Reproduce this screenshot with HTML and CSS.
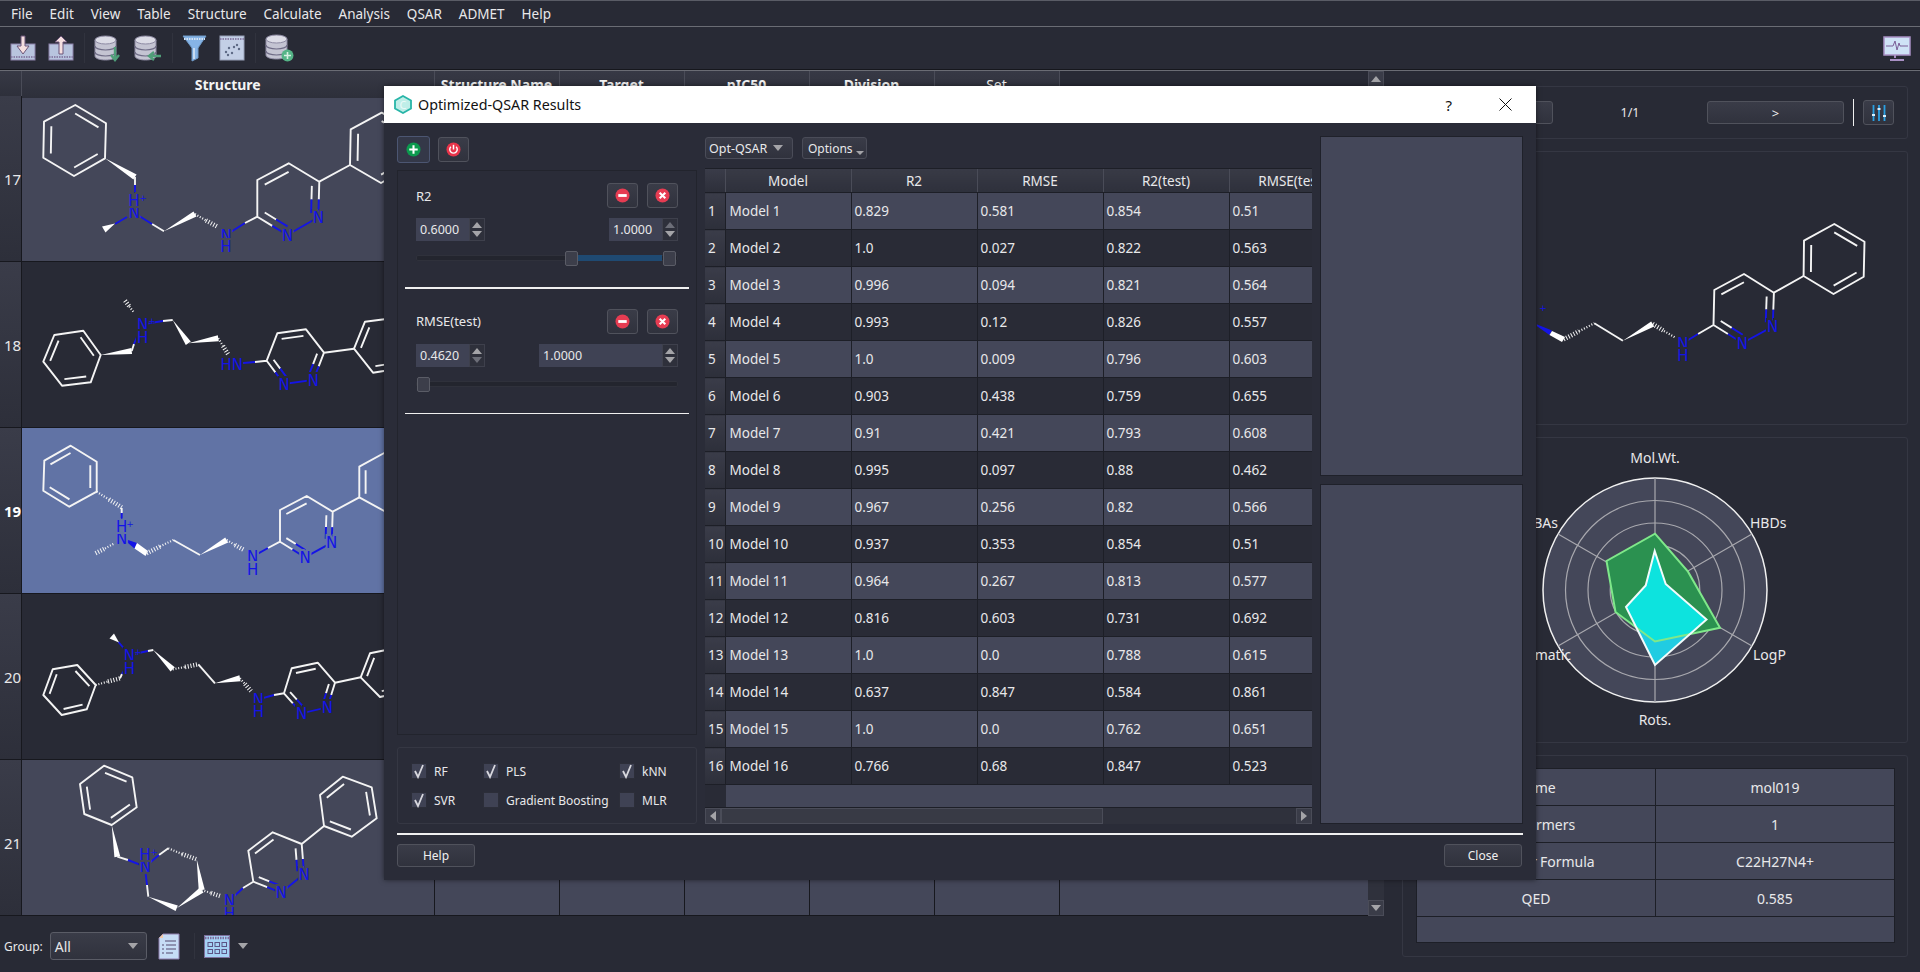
FILE: index.html
```html
<!DOCTYPE html>
<html lang="en">
<head>
    <meta charset="UTF-8">
    <title>Optimized-QSAR Results</title>
    <link rel="stylesheet" href="styles.css">
</head>
<body>
<svg class="icon-defs" width="0" height="0">
    <defs>
        <symbol id="ic-db" viewBox="0 0 24 26">
            <path d="M1 5v16c0 2.5 5 4 10.5 4S22 23.500 22 21V5z" fill="#c4c4d2" stroke="#8d8aa2"/>
            <ellipse cx="11.500" cy="5" rx="10.500" ry="4" fill="#dcdce6" stroke="#8d8aa2"/>
            <path d="M1 11c0 2.500 5 4 10.500 4S22 13.500 22 11M1 17c0 2.500 5 4 10.500 4S22 19.500 22 17" fill="none" stroke="#6f6c86" stroke-width="1.200"/>
        </symbol>
        <symbol id="ic-minus" viewBox="0 0 16 16">
            <circle cx="8" cy="8" r="7.500" fill="#e63c52"/>
            <rect x="3.500" y="6.500" width="9" height="3" fill="#fff"/>
        </symbol>
        <symbol id="ic-cross" viewBox="0 0 16 16">
            <circle cx="8" cy="8" r="7.500" fill="#e63c52"/>
            <path d="M5 5l6 6M11 5l-6 6" stroke="#fff" stroke-width="2.200"/>
        </symbol>
        <symbol id="ic-check" viewBox="0 0 16 16">
            <path d="M4 8l3 6 5-12" fill="none" stroke="#d8d8de" stroke-width="1.800"/>
        </symbol>
        <clipPath id="green-area">
            <polygon points="1655,533.700 1688,571.700 1720,627.700 1655,641.500 1615.500,612 1606.500,561"/>
        </clipPath>
    </defs>
</svg>

<div class="menu-bar">
    <span>File</span><span>Edit</span><span>View</span><span>Table</span><span>Structure</span><span>Calculate</span><span>Analysis</span><span>QSAR</span><span>ADMET</span><span>Help</span>
</div>

<div class="tool-bar">
    <svg class="tool" width="26" height="26" viewBox="0 0 26 26">
        <rect x="1" y="9" width="24" height="16" fill="#b8c4de" stroke="#8a80a8"/>
        <path d="M1 22h24" stroke="#8a80a8" stroke-width="2" stroke-dasharray="1.500 1"/>
        <path d="M11 1h4v10h4l-6 8-6-8h4z" fill="#f5dfe0" stroke="#6b5578"/>
    </svg>
    <svg class="tool" width="26" height="26" viewBox="0 0 26 26">
        <rect x="1" y="9" width="24" height="16" fill="#b8c4de" stroke="#8a80a8"/>
        <path d="M1 22h24" stroke="#8a80a8" stroke-width="2" stroke-dasharray="1.500 1"/>
        <path d="M11 19V7H7l6-6 6 6h-4v12z" fill="#f5dfe0" stroke="#6b5578"/>
    </svg>
    <span class="tool-sep"></span>
    <svg class="tool" width="28" height="27" viewBox="0 0 28 27">
        <use href="#ic-db" width="24" height="26"/>
        <path d="M21 12v11M17 20l4 5 4-5" fill="none" stroke="#4f9e78" stroke-width="2.400"/>
    </svg>
    <svg class="tool" width="28" height="27" viewBox="0 0 28 27">
        <use href="#ic-db" width="24" height="26"/>
        <path d="M27 21H16M20 17l-5 4 5 4" fill="none" stroke="#4f9e78" stroke-width="2.400"/>
    </svg>
    <span class="tool-sep"></span>
    <svg class="tool" width="25" height="27" viewBox="0 0 25 27">
        <path d="M1 1h23l-8 12v10l-6 3V13z" fill="#86b4e6" stroke="#6f9ac8"/>
        <path d="M2 4h21" stroke="#d4e4f6" stroke-width="2" stroke-dasharray="1.500 1"/>
        <path d="M12 13v11" stroke="#c8dcf2" stroke-width="2"/>
    </svg>
    <svg class="tool" width="26" height="26" viewBox="0 0 26 26">
        <rect x="1" y="1" width="24" height="24" fill="#c3cfe6" stroke="#97a0b8"/>
        <path d="M1 4h24" stroke="#8a80a8" stroke-width="2" stroke-dasharray="1.500 1"/>
        <g fill="#5e6a86"><circle cx="7" cy="17" r="1.200"/><circle cx="10" cy="13" r="1.200"/><circle cx="13" cy="18" r="1.200"/><circle cx="15" cy="12" r="1.200"/><circle cx="18" cy="10" r="1.200"/><circle cx="20" cy="14" r="1.200"/><circle cx="9" cy="20" r="1.200"/></g>
    </svg>
    <span class="tool-sep"></span>
    <svg class="tool" width="29" height="28" viewBox="0 0 29 28">
        <use href="#ic-db" width="24" height="26"/>
        <circle cx="22.500" cy="21.500" r="6" fill="#55b487"/>
        <path d="M22.500 18v7M19 21.500h7" stroke="#d6f0e2" stroke-width="1.600"/>
    </svg>
    <svg class="tool tool-end" width="28" height="25" viewBox="0 0 28 25">
        <rect x="1" y="1" width="26" height="18" fill="#cfe2f6" stroke="#a890c4" stroke-width="1.500"/>
        <path d="M3 10h7l2-5 2 9 2-7 1 3h8" fill="none" stroke="#7a5c96"/>
        <path d="M12 19v3M7 24h14" stroke="#a890c4" stroke-width="2"/>
    </svg>
</div>

<div class="content">
    <div class="left-column">
        <div class="table-area">
            <div class="mol-table">
                <div class="mol-head">
                    <div class="head-cell corner"></div>
                    <div class="head-cell head-main">Structure</div>
                    <div class="head-cell head-main">Structure Name</div>
                    <div class="head-cell head-main">Target</div>
                    <div class="head-cell head-main">pIC50</div>
                    <div class="head-cell head-main">Division</div>
                    <div class="head-cell head-plain">Set</div>
                </div>

                <div class="mol-row light">
                    <div class="row-num">17</div>
                    <div class="mol-cell">
                        <svg class="mol" width="412" height="165" viewBox="22 96 412 165">
                            <polygon class="b" points="75.300,105 106,123.300 105,158.300 74,176 43.300,157.700 44,121.700"/>
                            <path class="b in" d="M75.300 105L106 123.300M105 158.300L74 176M43.300 157.700L44 121.700"/>
                            <polygon class="w" points="105,158.300 133.400,179.500 136.600,174.500"/>
                            <path class="b" d="M135 177V185M152 224L164 231.300"/>
                            <path class="n" d="M135 185V193M134 212.700L152 224M127 217L115 224M226 235L245 223"/>
                            <polygon class="w" points="115,223.500 102,226.500 105.500,232.500"/>
                            <polygon class="w" points="164,231.300 193.500,211.400 196.500,216.600"/>
                            <path class="h1" d="M195 214L206 220.500"/><path class="h2" d="M206 220.500L218 227"/>
                            <path class="b" d="M245 223L257.300 216.700M318.800 199.500L319.300 181.700 288.700 163.300 257.300 180V216.700L272.300 225.900M319.300 181.700L350 165"/>
                            <path class="n" d="M318.800 199.500L318.300 217.300 287.300 235 272.300 225.900"/>
                            <g class="in">
                                <path class="b" d="M257.300 180L288.700 163.300M319.300 181.700L318.800 199.500M272.300 225.900L257.300 216.700"/>
                                <path class="n" d="M318.800 199.500L318.300 217.300M287.300 235L272.300 225.900"/>
                            </g>
                            <polygon class="b" points="350,165 350.700,129.300 381.700,112.700 413,130 412,165 381,183"/>
                            <path class="b in" d="M350 165L350.700 129.300M381.700 112.700L413 130M412 165L381 183"/>
                            <text class="t" x="134" y="218">N</text><text class="t" x="134" y="205.500">H</text><text class="p" x="143" y="201">+</text>
                            <text class="t" x="226" y="240.500">N</text><text class="t" x="226" y="252">H</text>
                            <text class="t" x="318.300" y="222.500">N</text><text class="t" x="287.300" y="240.500">N</text>
                        </svg>
                    </div>
                    <div class="cell"></div><div class="cell"></div><div class="cell"></div><div class="cell"></div><div class="cell"></div><div class="cell"></div>
                </div>

                <div class="mol-row dark">
                    <div class="row-num">18</div>
                    <div class="mol-cell">
                        <svg class="mol" width="412" height="165" viewBox="22 262 412 165">
                            <polygon class="b" points="83.300,330.700 100.700,355 90.700,382.300 62,385.700 43.300,361.700 54.300,335"/>
                            <path class="b in" d="M83.300 330.700L100.700 355M90.700 382.300L62 385.700M43.300 361.700L54.300 335"/>
                            <polygon class="w" points="100.700,355 131.300,348 132.100,354"/>
                            <path class="b" d="M131.700 351L134 344M163 321L172.700 320"/>
                            <path class="n" d="M134 344L137 337M142.700 324.300L163 321M232 364L255 362"/>
                            <path class="h1" d="M133.300 311.700L129 306"/><path class="h2" d="M129 306L124 299.300"/>
                            <polygon class="w" points="172.700,320 190.800,341.600 185.800,345"/>
                            <polygon class="w" points="188.300,343.300 217.800,335.300 218.800,341.300"/>
                            <path class="h1" d="M218.300 338.300L223 346"/><path class="h2" d="M223 346L228 354"/>
                            <path class="b" d="M255 362L266.700 360.700M318.700 366.400L324 352.700 306 329.300 277.300 333.300 266.700 360.700 275.400 372.400M324 352.700L354 348.700"/>
                            <path class="n" d="M318.700 366.400L313.300 380 284 384 275.400 372.400"/>
                            <g class="in">
                                <path class="b" d="M277.300 333.300L306 329.300M324 352.700L318.700 366.400M275.400 372.400L266.700 360.700"/>
                                <path class="n" d="M318.700 366.400L313.300 380M284 384L275.400 372.400"/>
                            </g>
                            <polygon class="b" points="354,348.700 365,321.700 394,318 412,341 402,368 373,372.700"/>
                            <path class="b in" d="M354 348.700L365 321.700M394 318L412 341M402 368L373 372.700"/>
                            <text class="t" x="142.700" y="329.800">N</text><text class="t" x="142.700" y="342.500">H</text><text class="p" x="152" y="324">+</text>
                            <text class="t" x="231.700" y="369.500">HN</text>
                            <text class="t" x="313.300" y="385.500">N</text><text class="t" x="284" y="389.500">N</text>
                        </svg>
                    </div>
                    <div class="cell"></div><div class="cell"></div><div class="cell"></div><div class="cell"></div><div class="cell"></div><div class="cell"></div>
                </div>

                <div class="mol-row selected">
                    <div class="row-num row-num-on">19</div>
                    <div class="mol-cell">
                        <svg class="mol" width="412" height="165" viewBox="22 428 412 165">
                            <polygon class="b" points="70.700,445.700 96.700,461.700 96.700,491.700 69.300,506.700 43.300,490.700 44.300,460.700"/>
                            <path class="b in" d="M44.300 460.700L70.700 445.700M96.700 461.700V491.700M69.300 506.700L43.300 490.700"/>
                            <path class="h1" d="M96.700 491.700L109 499.500"/><path class="h2" d="M109 499.500L121.700 507.300"/>
                            <path class="b" d="M121.700 508V513"/>
                            <path class="n" d="M121.700 513V519"/>
                            <path class="h1" d="M113.300 544L104 549"/><path class="h2" d="M104 549L94 554"/>
                            <polygon class="nf" points="122,538 137,543 134.500,548.500"/>
                            <polygon class="w" points="137,543 148,551 145.500,556 134.500,548.500"/>
                            <path class="h2" d="M146.700 553.300L160 546.500"/><path class="h1" d="M160 546.500L173.300 540"/>
                            <path class="b" d="M173.300 540L200 555"/>
                            <polygon class="w" points="200,555 225.200,537.400 228.200,542.600"/>
                            <path class="h1" d="M226.700 540L235 545"/><path class="h2" d="M235 545L244 550"/>
                            <path class="n" d="M252.700 556.700L268 548"/>
                            <path class="b" d="M268 548L280 541.700M332.200 527.200L332.700 511.700 306.700 496 280 510V541.700L292.500 549.500M332.700 511.700L359.300 497.300"/>
                            <path class="n" d="M332.200 527.200L331.700 542.700 305 557.300 292.500 549.500"/>
                            <g class="in">
                                <path class="b" d="M280 510L306.700 496M332.700 511.700L332.200 527.200M292.500 549.500L280 541.700"/>
                                <path class="n" d="M332.200 527.200L331.700 542.700M305 557.300L292.500 549.500"/>
                            </g>
                            <polygon class="b" points="359.300,497.300 359.300,466.700 386,452 412,467 412,498 386,512"/>
                            <path class="b in" d="M359.300 497.300V466.700M386 452L412 467M412 498L386 512"/>
                            <text class="t" x="121.700" y="543.800">N</text><text class="t" x="121.700" y="531.500">H</text><text class="p" x="130" y="526.500">+</text>
                            <text class="t" x="252.700" y="562.200">N</text><text class="t" x="252.700" y="574.800">H</text>
                            <text class="t" x="331.700" y="548.200">N</text><text class="t" x="305" y="562.800">N</text>
                        </svg>
                    </div>
                    <div class="cell"></div><div class="cell"></div><div class="cell"></div><div class="cell"></div><div class="cell"></div><div class="cell"></div>
                </div>

                <div class="mol-row dark">
                    <div class="row-num">20</div>
                    <div class="mol-cell">
                        <svg class="mol" width="412" height="165" viewBox="22 594 412 165">
                            <polygon class="b" points="77.300,665 95.700,685 86.700,709.300 61.700,715 43.300,695 52.700,669.300"/>
                            <path class="b in" d="M77.300 665L95.700 685M86.700 709.300L61.700 715M43.300 695L52.700 669.300"/>
                            <path class="h1" d="M95.700 685L108 681.500"/><path class="h2" d="M108 681.500L120 678.300"/>
                            <path class="b" d="M120 678.300L122 674"/>
                            <path class="n" d="M122 674L125 669M118.500 642L129.300 655M129.300 655L148 651"/>
                            <polygon class="w" points="119,642.500 109.500,638.500 114,633.500"/>
                            <path class="b" d="M148 651L153.300 650"/>
                            <polygon class="w" points="153.300,650 174.800,667.200 170.600,671.400"/>
                            <path class="h1" d="M172.700 669.300L185 667"/><path class="h2" d="M185 667L198.300 664.300"/>
                            <path class="b" d="M198.300 664.300L215 683.300"/>
                            <polygon class="w" points="215,683.300 239.400,675.300 240.600,681.300"/>
                            <path class="h1" d="M240 678.300L245 684"/><path class="h2" d="M245 684L251 691"/>
                            <path class="n" d="M258.300 699.300L274 695"/>
                            <path class="b" d="M274 695L284 693.300M331.200 695L335 682.700 317.700 662.700 291.700 668.300 284 693.300 292.900 703.300M335 682.700L360.700 677.300"/>
                            <path class="n" d="M331.200 695L327.300 707.300 301.700 713.300 292.900 703.300"/>
                            <g class="in">
                                <path class="b" d="M291.700 668.300L317.700 662.700M335 682.700L331.200 695M292.900 703.300L284 693.300"/>
                                <path class="n" d="M331.200 695L327.300 707.300M301.700 713.300L292.900 703.300"/>
                            </g>
                            <polygon class="b" points="360.700,677.300 370,653.300 396,648 414,667 406,691 380,697"/>
                            <path class="b in" d="M360.700 677.300L370 653.300M396 648L414 667M406 691L380 697"/>
                            <text class="t" x="129.300" y="660.500">N</text><text class="t" x="129.300" y="673.800">H</text><text class="p" x="138" y="655">+</text>
                            <text class="t" x="258.300" y="704.800">N</text><text class="t" x="258.300" y="717.200">H</text>
                            <text class="t" x="327.300" y="712.800">N</text><text class="t" x="301.700" y="718.800">N</text>
                        </svg>
                    </div>
                    <div class="cell"></div><div class="cell"></div><div class="cell"></div><div class="cell"></div><div class="cell"></div><div class="cell"></div>
                </div>

                <div class="mol-row light mol-row-last">
                    <div class="row-num">21</div>
                    <div class="mol-cell">
                        <svg class="mol" width="412" height="155" viewBox="22 760 412 155">
                            <polygon class="b" points="104,765.700 132.300,777.300 136.700,807.300 111.700,825 84.300,814 80,784"/>
                            <path class="b in" d="M104 765.700L132.300 777.300M136.700 807.300L111.700 825M84.300 814L80 784"/>
                            <polygon class="w" points="111.700,825 120.200,856.200 114.400,857.200"/>
                            <path class="b" d="M117.300 856.700L128 860M159 855L168.300 848.300M148.300 896.700L147 885"/>
                            <path class="n" d="M128 860L145 866.700M145 866.700L159 855M145.700 874L147 885M229.300 900.700L243 888"/>
                            <path class="h1" d="M168.300 848.300L182 854"/><path class="h2" d="M182 854L196.700 859.300"/>
                            <polygon class="w" points="196.700,859.300 204.700,889.500 198.700,890.500"/>
                            <polygon class="w" points="176.700,908.300 199.900,887.600 203.500,892.400"/>
                            <polygon class="w" points="148.300,896.700 175.600,911 177.800,905.600"/>
                            <path class="h1" d="M201.700 890L211 893"/><path class="h2" d="M211 893L220 896"/>
                            <path class="b" d="M243 888L253.300 881.700M302.900 859L301.700 844 272.700 832.300 248.300 850.700 253.300 881.700 267.200 887.200M301.700 844L324 826"/>
                            <path class="n" d="M302.900 859L304 874 281 892.700 267.200 887.200"/>
                            <g class="in">
                                <path class="b" d="M248.300 850.700L272.700 832.300M301.700 844L302.900 859M267.200 887.200L253.300 881.700"/>
                                <path class="n" d="M302.900 859L304 874M281 892.700L267.200 887.200"/>
                            </g>
                            <polygon class="b" points="324,826 320,795 342.700,776.700 371.700,787.300 376.700,818.300 351.700,836.700"/>
                            <path class="b in" d="M320 795L342.700 776.700M371.700 787.300L376.700 818.300M351.700 836.700L324 826"/>
                            <text class="t" x="145" y="872.200">N</text><text class="t" x="145" y="859.500">H</text><text class="p" x="154" y="855">+</text>
                            <text class="t" x="229.300" y="906.200">N</text><text class="t" x="229.300" y="918.500">H</text>
                            <text class="t" x="304" y="879.500">N</text><text class="t" x="281" y="898.200">N</text>
                        </svg>
                    </div>
                    <div class="cell"></div><div class="cell"></div><div class="cell"></div><div class="cell"></div><div class="cell"></div><div class="cell"></div>
                </div>
            </div>
            <div class="v-scroll">
                <div class="scroll-btn"><span class="tri tri-up"></span></div>
                <div class="v-track"></div>
                <div class="scroll-btn"><span class="tri tri-down"></span></div>
            </div>
        </div>
        <div class="group-bar">
            <span class="group-label">Group:</span>
            <div class="group-combo"><span>All</span><span class="tri tri-down"></span></div>
            <svg class="bar-icon" width="22" height="27" viewBox="0 0 22 27">
                <path d="M5 1h16v25H1V5z" fill="#c6dcf5" stroke="#8f7fae"/>
                <path d="M1 5h4V1z" fill="#f2c9a6"/>
                <path d="M7 8h11M4 12h2M8 12h10M4 16h2M8 16h10M4 20h2M8 20h7" stroke="#54486e" stroke-width="1.200"/>
            </svg>
            <span class="bar-sep"></span>
            <svg class="bar-icon-grid" width="26" height="23" viewBox="0 0 26 23">
                <rect x=".5" y=".5" width="25" height="22" fill="#a5d2f5" stroke="#7d6f9c"/>
                <path d="M1 3h24" stroke="#7d6f9c" stroke-width="2.500" stroke-dasharray="1.500 1"/>
                <g fill="none" stroke="#5c5486"><rect x="4" y="7.500" width="4.500" height="4"/><rect x="11" y="7.500" width="4.500" height="4"/><rect x="18" y="7.500" width="4.500" height="4"/><rect x="4" y="14.500" width="4.500" height="4"/><rect x="11" y="14.500" width="4.500" height="4"/><rect x="18" y="14.500" width="4.500" height="4"/></g>
            </svg>
            <span class="tri tri-down grid-arrow"></span>
        </div>
    </div>

    <div class="side">
        <div class="box nav-box">
            <button class="btn nav-btn"></button>
            <span class="page-count">1/1</span>
            <button class="btn nav-btn">&gt;</button>
            <span class="nav-sep"></span>
            <button class="btn icon-btn">
                <svg width="16" height="18" viewBox="0 0 16 18">
                    <path d="M2.500 1v16M8 1v16M13.500 1v16" stroke="#2a9fe0" stroke-width="1.800"/>
                    <path d="M1 11h3M6.500 5h3M12 12h3" stroke="#d8eefc" stroke-width="1.800"/>
                </svg>
            </button>
        </div>
        <div class="box mol-box">
            <svg class="mol" width="504" height="272" viewBox="1403 152 504 272">
                <polygon class="b" points="1834.300,224 1864.500,241.700 1863.700,276.700 1833.500,294 1803.600,276 1804,240.700"/>
                <path class="b in" d="M1834.300 224L1864.500 241.700M1863.700 276.700L1833.500 294M1803.600 276L1804 240.700"/>
                <path class="b" d="M1803.600 276L1773.900 292.700M1773.300 309.700L1773.900 292.700 1744 274 1714.300 290 1713.500 325 1728 334M1713.500 325L1698 334"/>
                <path class="n" d="M1773.300 309.700L1772.700 326.700 1742.400 343 1728 334M1682.900 343.300L1698 334"/>
                <g class="in">
                    <path class="b" d="M1714.300 290L1744 274M1773.900 292.700L1773.300 309.700M1728 334L1713.500 325"/>
                    <path class="n" d="M1773.300 309.700L1772.700 326.700M1742.400 343L1728 334"/>
                </g>
                <path class="h2" d="M1652.700 324L1664 331"/><path class="h1" d="M1664 331L1676 338"/>
                <polygon class="w" points="1622.900,340.700 1651.200,321.400 1654.200,326.600"/>
                <path class="b" d="M1594.300 323.300L1622.900 340.700"/>
                <path class="h2" d="M1563.700 339.300L1579 331.300"/><path class="h1" d="M1579 331.300L1594.300 323.300"/>
                <polygon class="nf" points="1531,322 1552,330.500 1549.500,335"/>
                <polygon class="w" points="1552,331 1565,337 1562,342 1549.500,335"/>
                <text class="t" x="1531" y="327.500">N</text><text class="t" x="1531" y="316">H</text><text class="p" x="1543" y="311">+</text>
                <text class="t" x="1682.900" y="348.800">N</text><text class="t" x="1682.900" y="360.500">H</text>
                <text class="t" x="1772.700" y="332.200">N</text><text class="t" x="1742.400" y="348.500">N</text>
            </svg>
        </div>
        <div class="box radar-box">
            <svg class="radar" width="504" height="304" viewBox="1403 438 504 304">
                <circle cx="1655" cy="590" r="112" fill="#444759" stroke="#f0f0f0" stroke-width="1.500"/>
                <g fill="none" stroke="#a8a8ae" stroke-width="1.200">
                    <circle cx="1655" cy="590" r="89.500"/><circle cx="1655" cy="590" r="67"/><circle cx="1655" cy="590" r="44.800"/><circle cx="1655" cy="590" r="22.400"/>
                    <path d="M1655 478V702M1558 534L1752 646M1752 534L1558 646"/>
                </g>
                <polygon points="1655,533.700 1688,571.700 1720,627.700 1655,641.500 1615.500,612 1606.500,561" fill="#2b9150"/>
                <polygon points="1654.700,551 1665.700,584 1706.500,619.400 1655,665 1626,607 1645.700,585.500" fill="#20cce2"/>
                <polygon points="1654.700,551 1665.700,584 1706.500,619.400 1655,665 1626,607 1645.700,585.500" fill="#0de3de" clip-path="url(#green-area)"/>
                <polygon points="1655,533.700 1688,571.700 1720,627.700 1655,641.500 1615.500,612 1606.500,561" fill="none" stroke="#7fe88a" stroke-width="2"/>
                <polygon points="1654.700,551 1665.700,584 1706.500,619.400 1655,665 1626,607 1645.700,585.500" fill="none" stroke="#f2fbfb" stroke-width="2"/>
                <text class="axis" x="1655" y="463" text-anchor="middle">Mol.Wt.</text>
                <text class="axis" x="1750" y="528">HBDs</text>
                <text class="axis" x="1753" y="660">LogP</text>
                <text class="axis" x="1655" y="725" text-anchor="middle">Rots.</text>
                <text class="axis" x="1558" y="528" text-anchor="end">HBAs</text>
                <text class="axis" x="1571" y="660" text-anchor="end">Aromatic</text>
            </svg>
        </div>
        <div class="box prop-box">
            <table class="prop-table">
                <tr><td>Name</td><td>mol019</td></tr>
                <tr><td>Conformers</td><td>1</td></tr>
                <tr><td><span class="tight">Molecular</span> Formula</td><td>C22H27N4+</td></tr>
                <tr><td>QED</td><td>0.585</td></tr>
            </table>
            <div class="prop-filler"></div>
        </div>
    </div>
</div>

<div class="dialog">
    <div class="title-bar">
        <svg class="title-icon" width="18" height="19" viewBox="0 0 18 19">
            <polygon points="9,1 17,5.500 17,13.500 9,18 1,13.500 1,5.500" fill="#bfeee8" stroke="#27b5a8" stroke-width="1.800"/>
            <text x="9" y="13.500" class="title-c">C</text>
        </svg>
        <span class="title-text">Optimized-QSAR Results</span>
        <span class="title-help">?</span>
        <svg class="title-close" width="13" height="13" viewBox="0 0 13 13">
            <path d="M.500.500l12 12M12.500.500l-12 12" stroke="#111" stroke-width="1"/>
        </svg>
    </div>
    <div class="dialog-body">
        <div class="dialog-main">
            <div class="filter-col">
                <div class="filter-tools">
                    <button class="btn small-btn small-btn-on">
                        <svg width="15" height="15" viewBox="0 0 16 16"><circle cx="8" cy="8" r="7.500" fill="#0c9a4e"/><path d="M8 3.500v9M3.500 8h9" stroke="#fff" stroke-width="2.200"/></svg>
                    </button>
                    <button class="btn small-btn">
                        <svg width="15" height="15" viewBox="0 0 16 16"><circle cx="8" cy="8" r="7.500" fill="#e8344a"/><path d="M8 3v5" stroke="#fff" stroke-width="1.600"/><path d="M5.200 5a4 4 0 1 0 5.600 0" fill="none" stroke="#fff" stroke-width="1.500"/></svg>
                    </button>
                </div>
                <div class="panel filter-panel">
                    <div class="range">
                        <div class="range-head">
                            <span>R2</span>
                            <div class="range-btns">
                                <button class="btn small-btn"><svg width="15" height="15"><use href="#ic-minus"/></svg></button>
                                <button class="btn small-btn"><svg width="15" height="15"><use href="#ic-cross"/></svg></button>
                            </div>
                        </div>
                        <div class="spin-row">
                            <div class="spin"><span class="spin-val">0.6000</span><span class="spin-arrows"><span class="tri tri-up"></span><span class="tri tri-down"></span></span></div>
                            <div class="spin"><span class="spin-val">1.0000</span><span class="spin-arrows"><span class="tri tri-up tri-dim"></span><span class="tri tri-down"></span></span></div>
                        </div>
                        <div class="slider">
                            <span class="slider-fill" style="left:62%;right:6%"></span>
                            <span class="handle" style="left:149px"></span>
                            <span class="handle" style="left:247px"></span>
                        </div>
                    </div>
                    <hr class="rule">
                    <div class="range">
                        <div class="range-head">
                            <span>RMSE(test)</span>
                            <div class="range-btns">
                                <button class="btn small-btn"><svg width="15" height="15"><use href="#ic-minus"/></svg></button>
                                <button class="btn small-btn"><svg width="15" height="15"><use href="#ic-cross"/></svg></button>
                            </div>
                        </div>
                        <div class="spin-row">
                            <div class="spin"><span class="spin-val">0.4620</span><span class="spin-arrows"><span class="tri tri-up"></span><span class="tri tri-down tri-dim"></span></span></div>
                            <div class="spin spin-wide"><span class="spin-val">1.0000</span><span class="spin-arrows"><span class="tri tri-up"></span><span class="tri tri-down"></span></span></div>
                        </div>
                        <div class="slider">
                            <span class="handle" style="left:1px"></span>
                        </div>
                    </div>
                    <hr class="rule">
                </div>
                <div class="panel check-panel">
                    <label class="check"><span class="box-mark"><svg width="16" height="16"><use href="#ic-check"/></svg></span>RF</label>
                    <label class="check"><span class="box-mark"><svg width="16" height="16"><use href="#ic-check"/></svg></span>PLS</label>
                    <label class="check"><span class="box-mark"><svg width="16" height="16"><use href="#ic-check"/></svg></span>kNN</label>
                    <label class="check"><span class="box-mark"><svg width="16" height="16"><use href="#ic-check"/></svg></span>SVR</label>
                    <label class="check"><span class="box-mark"></span>Gradient Boosting</label>
                    <label class="check"><span class="box-mark"></span>MLR</label>
                </div>
            </div>

            <div class="result-col">
                <div class="result-tools">
                    <div class="combo combo-qsar"><span>Opt-QSAR</span><span class="tri tri-down"></span></div>
                    <div class="combo combo-options"><span>Options</span><span class="tri tri-down tri-small"></span></div>
                </div>
                <div class="result-table">
                    <table class="models">
                        <thead>
                        <tr><th class="idx"></th><th>Model</th><th>R2</th><th>RMSE</th><th>R2(test)</th><th class="clip">RMSE(test)</th></tr>
                        </thead>
                        <tbody>
                        <tr><th class="idx">1</th><td>Model 1</td><td>0.829</td><td>0.581</td><td>0.854</td><td>0.51</td></tr>
                        <tr><th class="idx">2</th><td>Model 2</td><td>1.0</td><td>0.027</td><td>0.822</td><td>0.563</td></tr>
                        <tr><th class="idx">3</th><td>Model 3</td><td>0.996</td><td>0.094</td><td>0.821</td><td>0.564</td></tr>
                        <tr><th class="idx">4</th><td>Model 4</td><td>0.993</td><td>0.12</td><td>0.826</td><td>0.557</td></tr>
                        <tr><th class="idx">5</th><td>Model 5</td><td>1.0</td><td>0.009</td><td>0.796</td><td>0.603</td></tr>
                        <tr><th class="idx">6</th><td>Model 6</td><td>0.903</td><td>0.438</td><td>0.759</td><td>0.655</td></tr>
                        <tr><th class="idx">7</th><td>Model 7</td><td>0.91</td><td>0.421</td><td>0.793</td><td>0.608</td></tr>
                        <tr><th class="idx">8</th><td>Model 8</td><td>0.995</td><td>0.097</td><td>0.88</td><td>0.462</td></tr>
                        <tr><th class="idx">9</th><td>Model 9</td><td>0.967</td><td>0.256</td><td>0.82</td><td>0.566</td></tr>
                        <tr><th class="idx">10</th><td>Model 10</td><td>0.937</td><td>0.353</td><td>0.854</td><td>0.51</td></tr>
                        <tr><th class="idx">11</th><td>Model 11</td><td>0.964</td><td>0.267</td><td>0.813</td><td>0.577</td></tr>
                        <tr><th class="idx">12</th><td>Model 12</td><td>0.816</td><td>0.603</td><td>0.731</td><td>0.692</td></tr>
                        <tr><th class="idx">13</th><td>Model 13</td><td>1.0</td><td>0.0</td><td>0.788</td><td>0.615</td></tr>
                        <tr><th class="idx">14</th><td>Model 14</td><td>0.637</td><td>0.847</td><td>0.584</td><td>0.861</td></tr>
                        <tr><th class="idx">15</th><td>Model 15</td><td>1.0</td><td>0.0</td><td>0.762</td><td>0.651</td></tr>
                        <tr><th class="idx">16</th><td>Model 16</td><td>0.766</td><td>0.68</td><td>0.847</td><td>0.523</td></tr>
                        </tbody>
                    </table>
                    <div class="filler"><span class="filler-idx"></span><span class="filler-rest"></span></div>
                    <div class="h-scroll">
                        <div class="scroll-btn-h"><span class="tri tri-left"></span></div>
                        <div class="h-thumb"></div>
                        <div class="h-track"></div>
                        <div class="scroll-btn-h"><span class="tri tri-right"></span></div>
                    </div>
                </div>
            </div>

            <div class="plot-col">
                <div class="plot"></div>
                <div class="plot"></div>
            </div>
        </div>
        <hr class="rule rule-wide">
        <div class="dialog-foot">
            <button class="btn foot-btn">Help</button>
            <button class="btn foot-btn">Close</button>
        </div>
    </div>
</div>
</body>
</html>
```

FILE: styles.css
```css
html, body {
    margin: 0;
    padding: 0;
    height: 972px;
    overflow: hidden;
}
body {
    position: relative;
    background-color: #282a35;
    color: #e8e8ea;
    font-family: "Noto Sans", Arial, sans-serif;
    font-size: 14px;
    display: flex;
    flex-direction: column;
}
.icon-defs {
    position: absolute;
}
.menu-bar {
    height: 27px;
    box-sizing: border-box;
    display: flex;
    align-items: center;
    gap: 17px;
    padding-left: 11px;
    border-top: 1px solid #5a5c66;
    border-bottom: 1px solid #6a6c74;
    flex: none;
    font-size: 13.500px;
}
.tool-bar {
    height: 43px;
    box-sizing: border-box;
    display: flex;
    align-items: center;
    padding: 0 9px 0 10px;
    border-bottom: 1px solid #16171d;
    flex: none;
}
.tool {
    margin-right: 12px;
    flex: none;
}
.tool-end {
    margin: 0 0 0 auto;
}
.tool-sep {
    width: 1px;
    height: 30px;
    background-color: #31333e;
    margin: 0 9px 0 -2px;
}
.content {
    flex: 1;
    display: flex;
    border-top: 1px solid #6a6c74;
    min-height: 0;
}

/* tabla de moleculas */
.left-column {
    width: 1384px;
    flex: none;
    display: flex;
    flex-direction: column;
}
.table-area {
    height: 845px;
    display: flex;
}
.mol-table {
    width: 1368px;
    --row-bg: #282a35;
}
.mol-head {
    height: 24px;
    display: grid;
    grid-template-columns: 22px 412.5px repeat(4, 125px) 125px;
    border-bottom: 1px solid #17181e;
    box-sizing: content-box;
}
.head-cell {
    background: linear-gradient(#373945, #2d2f3a);
    border-right: 1px solid #4a4c58;
    box-sizing: border-box;
    text-align: center;
    line-height: 27px;
    font-weight: bold;
    color: #f4f4f4;
}
.head-plain {
    font-weight: normal;
}
.mol-row {
    display: grid;
    grid-template-columns: 22px 412.5px repeat(5, 125px) 1fr;
    height: 165px;
    border-bottom: 1px solid #17181e;
}
.mol-row-last {
    height: 155px;
}
.mol-row-last .row-num {
    padding-top: 11px;
    box-sizing: border-box;
}
.light {
    --row-bg: #444759;
    background-color: #444759;
}
.dark {
    --row-bg: #282a35;
    background-color: #282a35;
}
.selected {
    --row-bg: #6173a5;
    background-color: #6173a5;
}
.row-num {
    background: linear-gradient(#3a3c49, #2d2f3a);
    border-right: 1px solid #17181e;
    display: flex;
    align-items: center;
    padding-left: 4px;
    font-size: 15px;
}
.row-num-on {
    font-weight: bold;
    color: #fff;
}
.mol-cell {
    overflow: hidden;
    border-right: 1px solid #17181e;
}
.cell {
    border-right: 1px solid #17181e;
}
.cell:last-child {
    border-right: none;
}
.mol {
    display: block;
}
.b {
    fill: none;
    stroke: #f4f4f4;
    stroke-width: 1.900;
    stroke-linejoin: round;
}
.n {
    fill: none;
    stroke: #1414e6;
    stroke-width: 1.900;
}
.in {
    transform-box: fill-box;
    transform-origin: center;
    transform: scale(0.76);
}
.in, .in path {
    vector-effect: non-scaling-stroke;
}
.w {
    fill: #fff;
}
.nf {
    fill: #1414e6;
}
.h1 {
    fill: none;
    stroke: #f4f4f4;
    stroke-width: 2.200;
    stroke-dasharray: 1 1.800;
}
.h2 {
    fill: none;
    stroke: #f4f4f4;
    stroke-width: 4.500;
    stroke-dasharray: 1 1.800;
}
.t, .p {
    fill: #1414e6;
    font-family: "DejaVu Sans", sans-serif;
    text-anchor: middle;
    paint-order: stroke;
    stroke: var(--row-bg);
}
.t {
    font-size: 15px;
    stroke-width: 4px;
}
.p {
    font-size: 9px;
}
.side .mol {
    --row-bg: #282a35;
}
.v-scroll {
    width: 16px;
    display: flex;
    flex-direction: column;
}
.v-track {
    flex: 1;
    background-color: #2f313c;
}
.scroll-btn {
    height: 16px;
    background-color: #3a3c48;
    border: 1px solid #4a4c58;
    box-sizing: border-box;
    display: flex;
    align-items: center;
    justify-content: center;
}
.tri {
    display: inline-block;
    width: 0;
    height: 0;
    flex: none;
}
.tri-up {
    border-left: 5px solid transparent;
    border-right: 5px solid transparent;
    border-bottom: 6px solid #a4a4a8;
}
.tri-down {
    border-left: 5px solid transparent;
    border-right: 5px solid transparent;
    border-top: 6px solid #a4a4a8;
}
.tri-left {
    border-top: 5px solid transparent;
    border-bottom: 5px solid transparent;
    border-right: 6px solid #a4a4a8;
}
.tri-right {
    border-top: 5px solid transparent;
    border-bottom: 5px solid transparent;
    border-left: 6px solid #a4a4a8;
}
.tri-dim {
    border-top-color: #6c6e78;
    border-bottom-color: #6c6e78;
}
.group-bar {
    flex: 1;
    display: flex;
    align-items: center;
    padding: 4px 0 0 4px;
}
.group-label {
    font-size: 12px;
    margin-right: 7px;
}
.group-combo {
    width: 97px;
    height: 28px;
    box-sizing: border-box;
    border: 1px solid #5a5c66;
    border-radius: 3px;
    background: linear-gradient(#3a3c48, #30323d);
    display: flex;
    align-items: center;
    justify-content: space-between;
    padding: 0 8px 0 4px;
    margin-right: 11px;
}
.bar-sep {
    width: 1px;
    height: 26px;
    background-color: #31333e;
    margin: 0 9px 0 14px;
}
.grid-arrow {
    margin-left: 8px;
}

/* panel derecho */
.side {
    width: 506px;
    margin-left: 18px;
    padding-top: 15px;
    display: flex;
    flex-direction: column;
    gap: 12px;
}
.box {
    border: 1px solid #353743;
    border-radius: 3px;
    box-sizing: border-box;
}
.nav-box {
    height: 53px;
    display: flex;
    align-items: center;
    padding: 0 13px;
}
.btn {
    background: linear-gradient(#3a3c48, #30323d);
    border: 1px solid #50525c;
    border-radius: 3px;
    color: #f0f0f0;
    font-family: inherit;
    padding: 0;
    display: flex;
    align-items: center;
    justify-content: center;
}
.nav-btn {
    width: 137px;
    height: 23px;
    font-size: 13px;
    flex: none;
}
.page-count {
    flex: 1;
    text-align: center;
    font-size: 12.500px;
}
.nav-sep {
    width: 1px;
    height: 27px;
    background-color: #f0f0f0;
    margin: 0 9px;
}
.icon-btn {
    width: 31px;
    height: 25px;
}
.mol-box {
    height: 274px;
}
.radar-box {
    height: 306px;
}
.radar {
    display: block;
}
.axis {
    fill: #e8e8ea;
    font-size: 14px;
}
.prop-box {
    height: 202px;
    padding: 12px 13px 13px 13px;
}
.prop-table {
    width: 479px;
    border-collapse: collapse;
    table-layout: fixed;
    background-color: #444759;
}
.prop-table td {
    height: 36px;
    padding: 0;
    text-align: center;
    border: 1px solid #1d1f27;
}
.tight {
    letter-spacing: -0.700px;
}
.prop-filler {
    height: 26px;
    width: 479px;
    background-color: #444759;
    border: 1px solid #1d1f27;
    border-top: none;
    box-sizing: border-box;
}

/* ventana de resultados */
.dialog {
    position: absolute;
    left: 384px;
    top: 86px;
    width: 1152px;
    height: 794px;
    background-color: #2a2c38;
    box-shadow: 0 0 5px rgba(0, 0, 0, 0.5);
    font-size: 12px;
}
.title-bar {
    height: 37px;
    background-color: #fff;
    color: #111;
    display: flex;
    align-items: center;
    padding-left: 10px;
    font-size: 14.300px;
}
.title-icon {
    margin-right: 6px;
}
.title-c {
    font-size: 11px;
    fill: #eafaf8;
    text-anchor: middle;
}
.title-text {
    flex: 1;
}
.title-help {
    font-size: 15px;
    margin-right: 47px;
}
.title-close {
    margin-right: 24px;
}
.dialog-body {
    padding: 13px 13px 0 13px;
}
.dialog-main {
    display: grid;
    grid-template-columns: 300px 607px 203px;
    column-gap: 8px;
    height: 688px;
}
.filter-col {
    display: flex;
    flex-direction: column;
    min-height: 0;
}
.filter-tools {
    display: flex;
    gap: 8px;
    height: 27px;
    align-items: center;
    margin-bottom: 7px;
    flex: none;
}
.small-btn {
    width: 31px;
    height: 25px;
}
.small-btn-on {
    width: 33px;
    height: 27px;
    border-color: #4c5672;
    background: #343848;
}
.panel {
    border: 1px solid #22242d;
    box-sizing: border-box;
}
.filter-panel {
    height: 565px;
    padding: 12px 7px 0 7px;
}
.check-panel {
    height: 77px;
    margin-top: 12px;
    border-color: #353743;
    border-radius: 3px;
    padding: 15px 0 0 13px;
    display: grid;
    grid-template-columns: 72px 136px 1fr;
    grid-template-rows: 16px 16px;
    row-gap: 13px;
}
.check {
    display: flex;
    align-items: center;
    gap: 7px;
    white-space: nowrap;
}
.box-mark {
    width: 16px;
    height: 16px;
    background-color: #3f4254;
    border: 1px solid #2c2e39;
    box-sizing: border-box;
    display: block;
    flex: none;
}
.box-mark svg {
    display: block;
    margin: -1px;
}
.range {
    padding: 0 11px 21px 11px;
}
.range-head {
    height: 25px;
    display: flex;
    align-items: center;
    justify-content: space-between;
    font-size: 13px;
}
.range-btns {
    display: flex;
    gap: 9px;
}
.spin-row {
    margin-top: 10px;
    height: 23px;
    display: flex;
    justify-content: space-between;
    font-size: 12.500px;
}
.spin {
    width: 69px;
    display: flex;
    background-color: #2e303b;
    border-radius: 2px;
}
.spin-wide {
    width: 139px;
}
.spin-val {
    flex: 1;
    background-color: #3f4254;
    padding-left: 4px;
    line-height: 23px;
}
.spin-arrows {
    width: 16px;
    border: 1px solid #3e404c;
    box-sizing: border-box;
    display: flex;
    flex-direction: column;
    align-items: center;
    justify-content: center;
    gap: 3px;
    flex: none;
}
.slider {
    position: relative;
    margin-top: 10px;
    height: 14px;
}
.slider::before {
    content: "";
    position: absolute;
    left: 0;
    right: 0;
    top: 4px;
    height: 6px;
    background-color: #23252e;
    border: 1px solid #2f313b;
    box-sizing: border-box;
    border-radius: 2px;
}
.slider-fill {
    position: absolute;
    top: 4px;
    height: 6px;
    background-color: #1f4a72;
}
.handle {
    position: absolute;
    top: 0;
    width: 13px;
    height: 15px;
    background-color: #3c3e4a;
    border: 1px solid #5a5c66;
    border-radius: 2px;
    box-sizing: border-box;
}
.rule {
    border: none;
    height: 1.500px;
    background-color: #f0f0f0;
    margin: 1px 0 20px 0;
}
.rule-wide {
    margin: 9px 0 0 0;
}
.result-tools {
    display: flex;
    gap: 9px;
    height: 32px;
    padding-top: 1px;
    box-sizing: border-box;
    align-items: flex-start;
    font-size: 12.500px;
}
.combo {
    box-sizing: border-box;
    border: 1px solid #4a4c58;
    border-radius: 3px;
    background: linear-gradient(#3a3c48, #30323d);
    display: flex;
    align-items: center;
    padding-left: 3px;
    height: 22px;
}
.combo-qsar {
    width: 88px;
    gap: 6px;
}
.combo-options {
    width: 65px;
    padding-left: 5px;
    font-size: 12px;
    gap: 3px;
    height: 22px;
}
.tri-small {
    border-left-width: 4px;
    border-right-width: 4px;
    border-top-width: 4px;
    margin-top: 9px;
}
.result-table {
    height: 656px;
    display: flex;
    flex-direction: column;
    border-top: 1px solid #1d1f27;
    box-sizing: border-box;
    overflow: hidden;
}
.models {
    width: 645px;
    table-layout: fixed;
    border-collapse: collapse;
    font-size: 13.500px;
}
.models th, .models td {
    padding: 0;
    border: 1px solid #1d1f27;
    border-width: 0 1px 1px 0;
    font-weight: normal;
    overflow: hidden;
    white-space: nowrap;
}
.models thead th {
    height: 23px;
    background: linear-gradient(#383a46, #2e303b);
    border-right-color: #4a4c58;
    text-align: center;
}
.models td {
    height: 36px;
    padding-left: 3px;
}
.models td:first-of-type {
    padding-left: 4px;
}
.models .idx {
    width: 20px;
    background: linear-gradient(#3a3c49, #2d2f3a);
    font-size: 13.500px;
    text-align: left;
    padding-left: 3px;
    box-sizing: border-box;
}
.models th:not(.idx), .models td {
    width: 125px;
}
.models tbody tr:nth-child(odd) td {
    background-color: #444759;
}
.models tbody tr:nth-child(even) td {
    background-color: #292b36;
}
.filler {
    flex: 1;
    display: flex;
}
.filler-idx {
    width: 21px;
    background-color: #292b36;
}
.filler-rest {
    flex: 1;
    background-color: #444759;
}
.h-scroll {
    height: 17px;
    flex: none;
    display: flex;
    background-color: #2f313c;
    border-top: 1px solid #1d1f27;
    box-sizing: border-box;
}
.scroll-btn-h {
    width: 16px;
    background-color: #3a3c48;
    border: 1px solid #4a4c58;
    box-sizing: border-box;
    display: flex;
    align-items: center;
    justify-content: center;
    flex: none;
}
.h-thumb {
    width: 382px;
    background-color: #383a45;
    border: 1px solid #4a4c58;
    box-sizing: border-box;
    flex: none;
}
.h-track {
    flex: 1;
}
.plot-col {
    display: grid;
    grid-template-rows: 340px 340px;
    row-gap: 8px;
}
.plot {
    background-color: #444759;
    border: 1px solid #1f212a;
    box-sizing: border-box;
}
.dialog-foot {
    margin-top: 9px;
    padding-right: 1px;
    display: flex;
    justify-content: space-between;
}
.foot-btn {
    width: 78px;
    height: 23px;
    font-size: 12px;
}
```
